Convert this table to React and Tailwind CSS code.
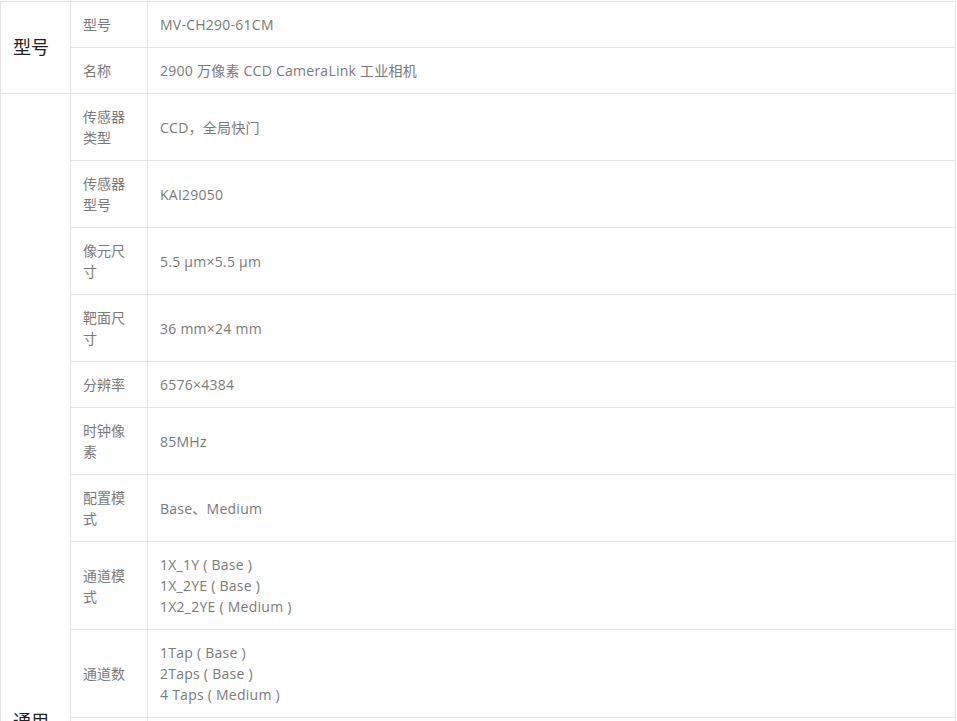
import React from "react";

const general = [
  { label: "传感器类型", value: ["CCD，全局快门"] },
  { label: "传感器型号", value: ["KAI29050"] },
  { label: "像元尺寸", value: ["5.5 μm×5.5 μm"] },
  { label: "靶面尺寸", value: ["36 mm×24 mm"] },
  { label: "分辨率", value: ["6576×4384"] },
  { label: "时钟像素", value: ["85MHz"] },
  { label: "配置模式", value: ["Base、Medium"] },
  { label: "通道模式", value: ["1X_1Y ( Base )", "1X_2YE ( Base )", "1X2_2YE ( Medium )"] },
  { label: "通道数", value: ["1Tap ( Base )", "2Taps ( Base )", "4 Taps ( Medium )"] },
  { label: "帧率", value: ["6.9 fps"] },
  { label: "像素位深", value: ["8 bit、10 bit、12 bit"] },
  { label: "曝光时间", value: ["10 μs～10 sec"] },
  { label: "增益", value: ["0 dB～12 dB"] },
  { label: "伽马校正", value: ["支持，0～4"] },
  { label: "同步模式", value: ["外触发、软触发"] },
  { label: "数据接口", value: ["CameraLink"] },
  { label: "电源", value: ["12 VDC"] },
  { label: "功耗", value: ["典型值 7.5 W"] },
  { label: "镜头接口", value: ["F 口"] },
  { label: "尺寸", value: ["68 mm×68 mm×70 mm"] },
];

const cell = "border border-[#e4e4e4] px-3 py-3 align-middle";
const font = { fontFamily: '"Open Sans", "Noto Sans CJK SC", sans-serif' };

function Row({ label, value, head }) {
  return (
    <tr>
      {head}
      <td className={`${cell} w-[77px] text-[#7a7a7a]`}>{label}</td>
      <td className={`${cell} text-[#7a7a7a] tracking-[0.25px]`}>
        {value.map((v, i) => (
          <div key={i}>{v}</div>
        ))}
      </td>
    </tr>
  );
}

export default function App() {
  return (
    <div className="bg-white pt-[1px] h-[721px] overflow-hidden" style={font}>
      <table className="border-collapse w-[956px] text-[14px] leading-[21px] table-fixed">
        <colgroup>
          <col className="w-[70px]" />
          <col className="w-[77px]" />
          <col />
        </colgroup>
        <tbody>
          <Row
            label="型号"
            value={["MV-CH290-61CM"]}
            head={
              <td rowSpan={2} className={`${cell} text-[18px] text-[#222]`}>型号</td>
            }
          />
          <Row label="名称" value={["2900 万像素 CCD CameraLink 工业相机"]} />
          {general.map((r, i) => (
            <Row
              key={r.label}
              label={r.label}
              value={r.value}
              head={
                i === 0 ? (
                  <td rowSpan={general.length} className={`${cell} text-[18px] text-[#222]`}>通用</td>
                ) : null
              }
            />
          ))}
        </tbody>
      </table>
    </div>
  );
}
